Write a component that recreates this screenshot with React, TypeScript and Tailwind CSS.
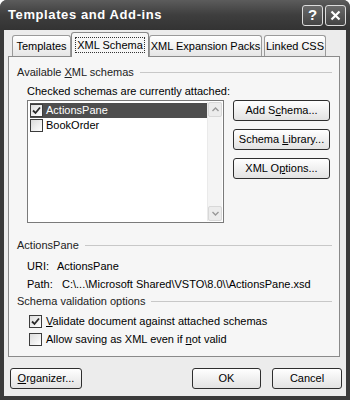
import React from 'react';

const font = { fontFamily: '"Liberation Sans", Arial, sans-serif' };

function Check({ checked }: { checked?: boolean }) {
  return (
    <span className="inline-flex w-[13px] h-[13px] border border-[#3c3c3c] bg-gradient-to-br from-[#dcdcdc] to-white items-center justify-center shrink-0">
      {checked && (
        <svg width="9" height="9" viewBox="0 0 9 9">
          <path d="M1 4.5 L3.5 7 L8 1.5" fill="none" stroke="#2a2a2a" strokeWidth="1.8" />
        </svg>
      )}
    </span>
  );
}

function Btn({ children, className = '' }: { children: React.ReactNode; className?: string }) {
  return (
    <div
      className={`h-[21px] flex items-center justify-center rounded-[3px] border border-[#2e2e2e] bg-gradient-to-b from-white to-[#e2e2e2] text-[11px] text-black ${className}`}
    >
      <span className="whitespace-nowrap">{children}</span>
    </div>
  );
}

function GroupLabel({ children }: { children: React.ReactNode }) {
  return (
    <div className="flex items-center gap-[6px] pr-[7px] text-[11px] leading-[13px] text-[#222]">
      <span className="whitespace-nowrap">{children}</span>
      <div className="flex-1 h-px bg-[#c8c8c8]" />
    </div>
  );
}

function Tab({ label, selected, w }: { label: string; selected?: boolean; w: string }) {
  if (selected) {
    return (
      <div className={`${w} shrink-0 h-[25px] -mb-px px-[3px] pt-[4px] border border-b-0 border-[#8a8a8a] bg-[#f6f6f6] rounded-t-[3px] relative z-10`}>
        <div className="border border-dotted border-[#333] text-[11px] leading-[14px] text-center whitespace-nowrap">{label}</div>
      </div>
    );
  }
  return (
    <div className={`${w} shrink-0 h-[21px] pt-[3px] border border-b-0 border-[#9a9a9a] bg-gradient-to-b from-white to-[#e6e6e6] rounded-t-[3px] text-[11px] leading-[14px] text-center whitespace-nowrap`}>
      {label}
    </div>
  );
}

export default function App() {
  return (
    <div style={font} className="w-[350px] h-[400px] bg-[#3a3a3a] rounded-t-[7px] flex flex-col text-black">
      <div className="h-[30px] flex items-center justify-between pl-[8px] pr-[4px] rounded-t-[7px] bg-gradient-to-b from-[#5c5c5c] via-[#3e3e3e] to-[#333]">
        <span className="text-white font-bold text-[13px] tracking-[0.6px]">Templates and Add-ins</span>
        <div className="flex gap-[2px]">
          <div className="w-[21px] h-[21px] rounded-[3px] border border-[#dcdcdc] bg-gradient-to-b from-[#6a6a6a] to-[#444] flex items-center justify-center text-white font-bold text-[15px]">?</div>
          <div className="w-[21px] h-[21px] rounded-[3px] border border-[#dcdcdc] bg-gradient-to-b from-[#6a6a6a] to-[#444] flex items-center justify-center">
            <svg width="11" height="11" viewBox="0 0 11 11">
              <path d="M1.5 1.5 L9.5 9.5 M9.5 1.5 L1.5 9.5" stroke="white" strokeWidth="2.2" />
            </svg>
          </div>
        </div>
      </div>

      <div className="flex-1 mx-[4px] mb-[4px] bg-[#ececec] flex flex-col px-[4px]">
        <div className="flex items-end pl-[4px] pt-[3px] h-[26px]">
          <Tab w="w-[59px]" label="Templates" />
          <Tab w="w-[78px]" label="XML Schema" selected />
          <Tab w="w-[113px]" label="XML Expansion Packs" />
          <div className="w-[2px] shrink-0" />
          <Tab w="w-[62px]" label="Linked CSS" />
        </div>

        <div className="h-[301px] w-[332px] border border-[#8a8a8a] bg-[#f6f6f6] pl-[8px] pt-[9px] flex flex-col text-[11px]">
          <GroupLabel>
            Available <u>X</u>ML schemas
          </GroupLabel>
          <div className="pl-[10px] mt-[6px] leading-[13px]">Checked schemas are currently attached:</div>
          <div className="flex pl-[10px] mt-[2px]">
            <div className="w-[197px] h-[123px] border border-[#7a7a7a] bg-white flex p-px">
              <div className="flex-1 flex flex-col pt-[1px] pl-[1px]">
                <div className="h-[15px] flex items-center gap-[3px] bg-[#4e4e4e] text-white">
                  <Check checked />
                  <span>ActionsPane</span>
                </div>
                <div className="h-[15px] flex items-center gap-[3px]">
                  <Check />
                  <span>BookOrder</span>
                </div>
              </div>
              <div className="w-[15px] bg-[#f4f4f4] border-l border-[#eaeaea] flex flex-col justify-between">
                <div className="h-[15px] border border-[#d8d8d8] bg-[#ececec] flex items-center justify-center rounded-[2px]">
                  <svg width="7" height="5" viewBox="0 0 7 5"><path d="M0.5 4 L3.5 1 L6.5 4" fill="none" stroke="#999" strokeWidth="1.4" /></svg>
                </div>
                <div className="h-[15px] border border-[#d8d8d8] bg-[#ececec] flex items-center justify-center rounded-[2px]">
                  <svg width="7" height="5" viewBox="0 0 7 5"><path d="M0.5 1 L3.5 4 L6.5 1" fill="none" stroke="#999" strokeWidth="1.4" /></svg>
                </div>
              </div>
            </div>
            <div className="ml-[9px] w-[97px] flex flex-col gap-[8px]">
              <Btn>Add S<u>c</u>hema...</Btn>
              <Btn>Schema <u>L</u>ibrary...</Btn>
              <Btn>XML O<u>p</u>tions...</Btn>
            </div>
          </div>

          <div className="mt-[16px]">
            <GroupLabel>ActionsPane</GroupLabel>
          </div>
          <div className="pl-[10px] mt-[8px] leading-[13px] flex">
            <span className="w-[30px]">URI:</span>
            <span>ActionsPane</span>
          </div>
          <div className="pl-[10px] mt-[5px] leading-[13px] flex">
            <span className="w-[35px]">Path:</span>
            <span>C:\...\Microsoft Shared\VSTO\8.0\\ActionsPane.xsd</span>
          </div>
          <div className="mt-[4px]">
            <GroupLabel>Schema validation options</GroupLabel>
          </div>
          <div className="pl-[12px] mt-[7px] flex items-center gap-[4px] leading-[13px]">
            <Check checked />
            <span><u>V</u>alidate document against attached schemas</span>
          </div>
          <div className="pl-[12px] mt-[5px] flex items-center gap-[4px] leading-[13px]">
            <Check />
            <span>Allow saving as XML even if <u>n</u>ot valid</span>
          </div>
        </div>

        <div className="flex items-center mt-[11px] pl-[2px]">
          <Btn className="w-[72px]"><u>O</u>rganizer...</Btn>
          <div className="flex-1" />
          <Btn className="w-[69px]">OK</Btn>
          <Btn className="w-[70px] ml-[11px]">Cancel</Btn>
        </div>
      </div>
    </div>
  );
}
